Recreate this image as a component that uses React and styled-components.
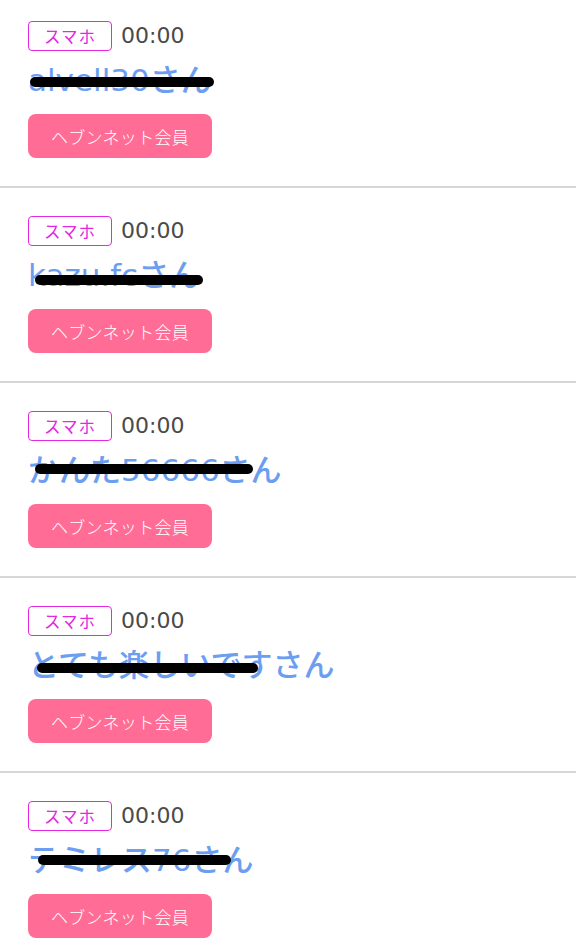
import React from "react";
import styled, { createGlobalStyle } from "styled-components";

const GlobalStyle = createGlobalStyle`
  html, body {
    margin: 0;
    padding: 0;
    background: #fff;
    overflow: hidden;
  }

  body {
    font-family: "DejaVu Sans", "Noto Sans CJK JP", sans-serif;
  }
`;

const users = [
  { name: "alvell30さん", bar: { left: 2, top: 17, width: 184 } },
  { name: "kazu.fcさん", bar: { left: 7, top: 20, width: 168 } },
  { name: "かんた56666さん", bar: { left: 7, top: 14, width: 218 } },
  { name: "とても楽しいですさん", bar: { left: 9, top: 18, width: 221 } },
  { name: "テミレス76さん", bar: { left: 10, top: 15, width: 193 } },
];

const App = () => (
  <>
    <GlobalStyle />
    <StyledList>
      {users.map((user, i) => (
        <Visitor key={i} {...user} />
      ))}
    </StyledList>
  </>
);

export default App;

const Visitor = ({ name, bar }) => (
  <StyledItem>
    <StyledMeta>
      <StyledDevice>スマホ</StyledDevice>
      <StyledTime>00:00</StyledTime>
    </StyledMeta>
    <StyledName>
      {name}
      <StyledRedact $left={bar.left} $top={bar.top} $width={bar.width} />
    </StyledName>
    <StyledMember>ヘブンネット会員</StyledMember>
  </StyledItem>
);

const StyledList = styled.ul`
  list-style: none;
  margin: -7px 0 0 0;
  padding: 0;
`;

const StyledItem = styled.li`
  display: flex;
  flex-direction: column;
  align-items: flex-start;

  padding: 28px 28px 28px 28px;
  border-bottom: 2px solid #d6d6d6;
`;

const StyledMeta = styled.div`
  display: flex;
  align-items: center;
  gap: 9px;
  height: 30px;
`;

const StyledDevice = styled.span`
  display: inline-flex;
  align-items: center;
  box-sizing: border-box;
  height: 30px;
  padding: 0 15px;

  border: 1.5px solid #e327e3;
  border-radius: 4px;

  color: #e327e3;
  font-family: "Noto Sans CJK JP", sans-serif;
  font-size: 16.5px;
  letter-spacing: 1px;
`;

const StyledTime = styled.span`
  color: #4a4a4a;
  font-size: 22px;
  line-height: 30px;
`;

const StyledName = styled.div`
  position: relative;
  margin: 9px 0 13px 0;

  color: #6c9ef0;
  font-size: 31px;
  font-weight: 500;
  line-height: 41px;
  white-space: nowrap;
`;

const StyledRedact = styled.span`
  position: absolute;
  left: ${(p) => p.$left}px;
  top: ${(p) => p.$top}px;
  width: ${(p) => p.$width}px;
  height: 10px;

  background: #000;
  border-radius: 5px;
`;

const StyledMember = styled.button`
  box-sizing: border-box;
  height: 44px;
  width: 184px;
  padding: 0;

  background: #ff6d97;
  border: none;
  border-radius: 8px;

  color: #fff;
  font-family: "Noto Sans CJK JP", sans-serif;
  font-size: 17px;
  font-weight: 300;
  letter-spacing: 0.3px;
`;
